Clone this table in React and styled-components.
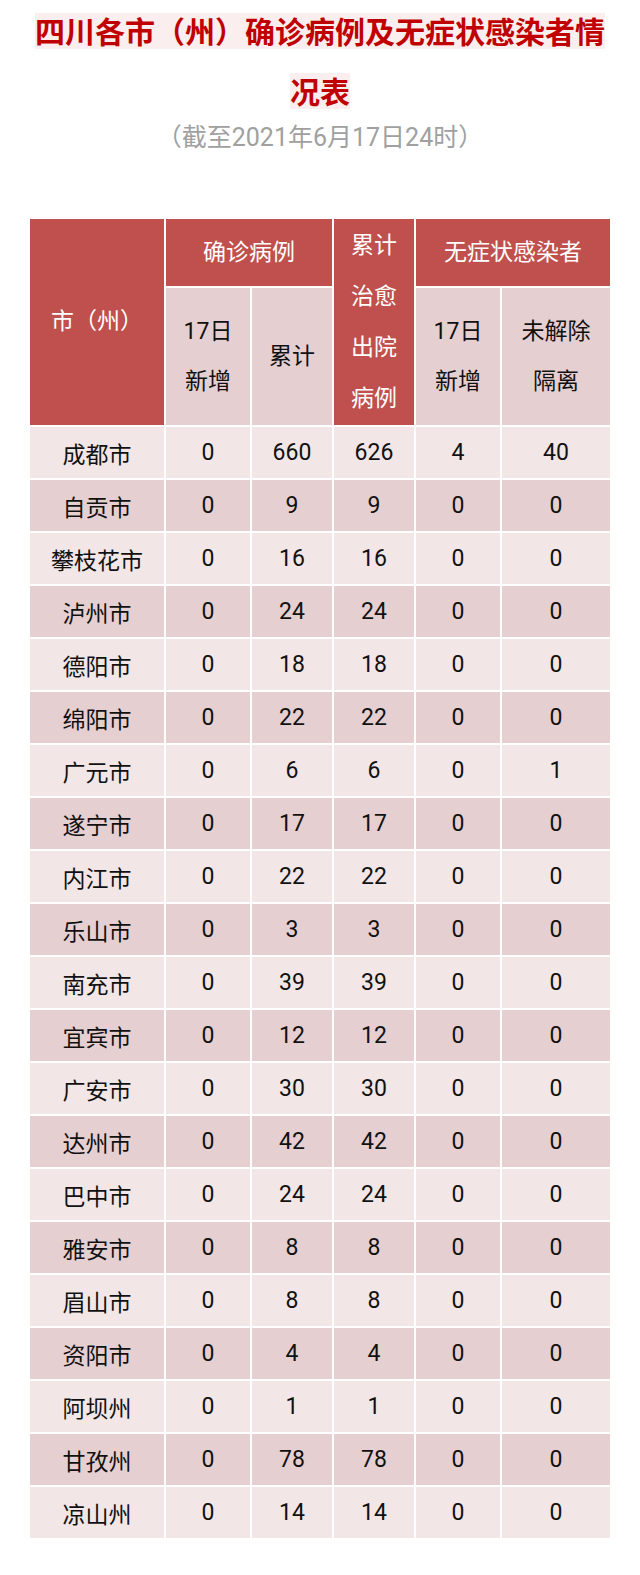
import React from 'react';
import styled, { createGlobalStyle } from 'styled-components';

const GlobalStyle = createGlobalStyle`
    html, body {
        margin: 0;
        padding: 0;
        background: #ffffff;
    }
    body {
        font-family: Roboto, "Noto Sans CJK SC", "Noto Sans", sans-serif;
    }
`;

const Page = styled.div`
    width: 640px;
    padding: 0 30px;
    box-sizing: border-box;
`;

const Title = styled.h1`
    margin: 0;
    font-family: "Noto Sans CJK SC", sans-serif;
    font-size: 30px;
    line-height: 60px;
    font-weight: 700;
    color: #c00000;
    text-align: center;
    span {
        background: linear-gradient(
            transparent 5px,
            #fbeeee 5px,
            #fbeeee calc(100% - 3px),
            transparent calc(100% - 3px)
        );
    }
`;

const SubTitle = styled.div`
    font-size: 25px;
    line-height: 36px;
    color: #a0a0a0;
    text-align: center;
`;

const Grid = styled.div`
    margin-top: 63px;
    display: grid;
    grid-template-columns: 134px 84px 80px 80px 84px 108px;
    grid-template-rows: 67px 137px;
    grid-auto-rows: 51px;
    gap: 2px;
    font-size: 23px;
`;

const Cell = styled.div`
    display: flex;
    align-items: center;
    justify-content: center;
    text-align: center;
    color: #111;
    background: ${p => (p.$dark ? '#e6cfd0' : '#f2e6e6')};
    grid-column: ${p => p.$col || 'auto'};
    grid-row: ${p => p.$row || 'auto'};
`;

const HeadCell = styled(Cell)`
    background: #c0504d;
    color: #ffffff;
    line-height: ${p => p.$lh || '30px'};
`;

const SubHead = styled(Cell)`
    background: #e6cfd0;
    line-height: 50px;
`;

const rows = [
    ['成都市', 0, 660, 626, 4, 40],
    ['自贡市', 0, 9, 9, 0, 0],
    ['攀枝花市', 0, 16, 16, 0, 0],
    ['泸州市', 0, 24, 24, 0, 0],
    ['德阳市', 0, 18, 18, 0, 0],
    ['绵阳市', 0, 22, 22, 0, 0],
    ['广元市', 0, 6, 6, 0, 1],
    ['遂宁市', 0, 17, 17, 0, 0],
    ['内江市', 0, 22, 22, 0, 0],
    ['乐山市', 0, 3, 3, 0, 0],
    ['南充市', 0, 39, 39, 0, 0],
    ['宜宾市', 0, 12, 12, 0, 0],
    ['广安市', 0, 30, 30, 0, 0],
    ['达州市', 0, 42, 42, 0, 0],
    ['巴中市', 0, 24, 24, 0, 0],
    ['雅安市', 0, 8, 8, 0, 0],
    ['眉山市', 0, 8, 8, 0, 0],
    ['资阳市', 0, 4, 4, 0, 0],
    ['阿坝州', 0, 1, 1, 0, 0],
    ['甘孜州', 0, 78, 78, 0, 0],
    ['凉山州', 0, 14, 14, 0, 0],
];

function App() {
    return (
        <Page>
            <GlobalStyle />
            <Title><span>四川各市（州）确诊病例及无症状感染者情况表</span></Title>
            <SubTitle>（截至2021年6月17日24时）</SubTitle>
            <Grid>
                <HeadCell $col="1" $row="1 / span 2">市（州）</HeadCell>
                <HeadCell $col="2 / span 2" $row="1">确诊病例</HeadCell>
                <HeadCell $col="4" $row="1 / span 2" $lh="51px">累计<br />治愈<br />出院<br />病例</HeadCell>
                <HeadCell $col="5 / span 2" $row="1">无症状感染者</HeadCell>
                <SubHead $col="2" $row="2">17日<br />新增</SubHead>
                <SubHead $col="3" $row="2">累计</SubHead>
                <SubHead $col="5" $row="2">17日<br />新增</SubHead>
                <SubHead $col="6" $row="2">未解除<br />隔离</SubHead>
                {rows.map((r, i) =>
                    r.map((v, j) => (
                        <Cell key={i + '-' + j} $dark={i % 2 === 1}>{v}</Cell>
                    ))
                )}
            </Grid>
        </Page>
    );
}

export default App;
